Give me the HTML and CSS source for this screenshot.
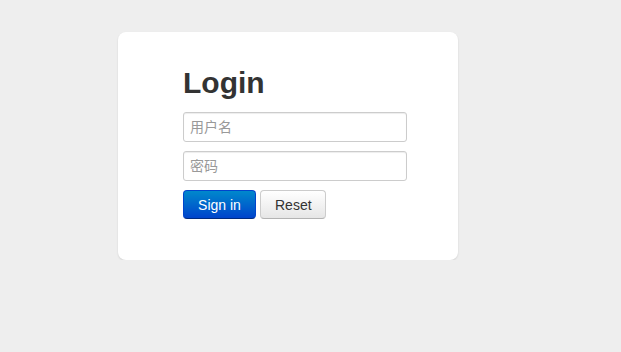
FILE: index.html
```html
<!DOCTYPE html>
<html lang="en">
<head>
    <meta charset="UTF-8">
    <meta name="viewport" content="width=device-width, initial-scale=1.0">
    <title>Login</title>
    <link rel="stylesheet" href="styles.css">
</head>
<body>
    <div class="login-card">
        <form class="login-form">
            <h2 class="login-title">Login</h2>
            <input type="text" class="login-input" placeholder="用户名">
            <input type="password" class="login-input" placeholder="密码">
            <div class="login-actions">
                <button type="submit" class="btn btn-primary">Sign in</button>
                <button type="reset" class="btn btn-default">Reset</button>
            </div>
        </form>
    </div>
</body>
</html>
```

FILE: styles.css
```css
* {
    margin: 0;
    padding: 0;
    box-sizing: border-box;
    font-family: "Liberation Sans", Arial, "Noto Sans CJK SC", sans-serif;
}

body {
    background-color: #eeeeee;
    padding: 32px 0 0 118px;
}

.login-card {
    width: 340px;
    background: #fff;
    border-radius: 8px;
    box-shadow: 0 1px 2px rgba(0, 0, 0, 0.12);
    padding: 31px 0 41px 65px;
}

.login-form {
    display: flex;
    flex-direction: column;
    gap: 9px;
    width: 224px;
}

.login-title {
    font-size: 30px;
    font-weight: bold;
    color: #333;
    line-height: 40px;
    height: 40px;
}

.login-input {
    height: 30px;
    width: 224px;
    border: 1px solid #ccc;
    border-radius: 3px;
    padding: 4px 6px;
    font-size: 14px;
    color: #555;
    outline: none;
    box-shadow: inset 0 1px 1px rgba(0, 0, 0, 0.075);
}

.login-input::placeholder {
    color: #999;
}

.login-actions {
    display: flex;
    gap: 4px;
}

.btn {
    height: 29px;
    font-size: 14px;
    border-radius: 4px;
    border: 1px solid #ccc;
    cursor: pointer;
    padding: 0 14px;
}

.btn-primary {
    width: 73px;
    color: #fff;
    background: linear-gradient(to bottom, #0088cc, #0044cc);
    border-color: #0044cc #0044cc #002a80;
}

.btn-default {
    width: 66px;
    color: #333;
    background: linear-gradient(to bottom, #ffffff, #e6e6e6);
    border-color: #ccc #ccc #b3b3b3;
}
```
